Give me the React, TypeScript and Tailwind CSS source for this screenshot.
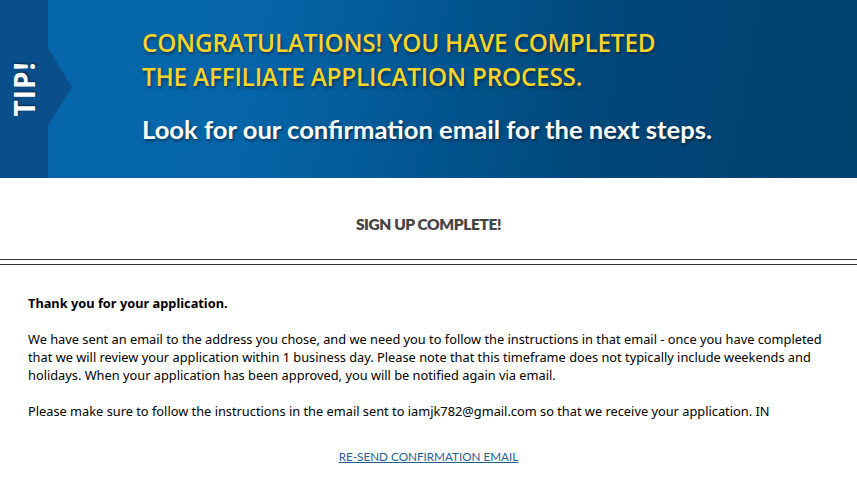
import React from "react";

export default function App() {
  return (
    <div className="w-[857px] h-[481px] bg-white overflow-hidden">
      {/* Banner */}
      <div className="relative flex h-[178px] bg-[linear-gradient(100deg,#0567ab_0%,#0565a8_30%,#00477a_70%,#00426d_100%)]">
        <div className="relative w-[48px] h-full bg-[#0a4f8b] flex items-center justify-center">
          <span className="block -rotate-90 text-white font-bold text-[28px] leading-none tracking-[1px] whitespace-nowrap [font-family:'Open_Sans',sans-serif] [text-shadow:1px_1px_2px_rgba(0,0,0,0.5)]">
            TIP!
          </span>
          <svg className="absolute left-[48px] top-[48px]" width="24" height="80" viewBox="0 0 24 80">
            <polygon points="0,0 24,39 0,78" fill="#0a4f8b" />
          </svg>
        </div>
        <div className="pl-[94px] pt-[26px] [font-family:'Open_Sans',sans-serif]">
          <div className="text-[#f8d32a] font-semibold text-[24.3px] leading-[34px] [text-shadow:1px_2px_3px_rgba(0,0,0,0.45)] tracking-[-0.2px]">
            CONGRATULATIONS! YOU HAVE COMPLETED
            <br />
            THE AFFILIATE APPLICATION PROCESS.
          </div>
          <div className="mt-[19px] text-white font-bold text-[25.6px] leading-[32px] [font-family:Lato,sans-serif] [text-shadow:1px_2px_3px_rgba(0,0,0,0.45)]">
            Look for our confirmation email for the next steps.
          </div>
        </div>
      </div>

      {/* Heading */}
      <div className="h-[81px] flex items-center justify-center pt-[12px]">
        <span className="text-[#444] font-extrabold text-[15.5px] [font-family:Lato,sans-serif] tracking-[-0.4px]">
          SIGN UP COMPLETE!
        </span>
      </div>
      <div className="border-t border-[#333]" />
      <div className="mt-[4px] border-t border-[#333]" />

      {/* Body */}
      <div className="px-[28px] pt-[29px] text-black text-[12.8px] leading-[18px] [font-family:'Noto_Sans',sans-serif] whitespace-nowrap">
        <p className="font-bold">Thank you for your application.</p>
        <p className="mt-[18px]">
          We have sent an email to the address you chose, and we need you to follow the instructions in that email - once you have completed
          <br />
          that we will review your application within 1 business day. Please note that this timeframe does not typically include weekends and
          <br />
          holidays. When your application has been approved, you will be notified again via email.
        </p>
        <p className="mt-[18px]">
          Please make sure to follow the instructions in the email sent to iamjk782@gmail.com so that we receive your application. IN
        </p>
        <div className="mt-[27px] text-center">
          <a href="#" className="text-[#1f5f94] underline text-[11.7px] [font-family:Lato,sans-serif]">
            RE-SEND CONFIRMATION EMAIL
          </a>
        </div>
      </div>
    </div>
  );
}
